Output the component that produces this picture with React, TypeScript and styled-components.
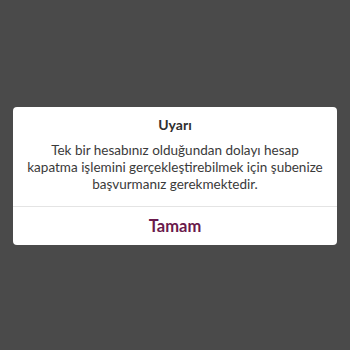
import React from 'react'
import styled, { createGlobalStyle } from 'styled-components'

const Global = createGlobalStyle`
  html, body {
    margin: 0;
    padding: 0;
    background: #4a4a4a;
  }
  #root {
    min-height: 100vh;
  }
`

const Overlay = styled.div`
  width: 350px;
  height: 350px;
  background: #4a4a4a;
  display: flex;
  align-items: center;
  justify-content: center;
  padding-top: 2px;
  box-sizing: border-box;
  font-family: Lato, 'Noto Sans', sans-serif;
`

const Card = styled.div`
  width: 324px;
  height: 138px;
  background: #ffffff;
  border-radius: 4px;
  display: flex;
  flex-direction: column;
  overflow: hidden;
`

const Body = styled.div`
  height: 100px;
  box-sizing: border-box;
  padding: 9px 12px 0;
  text-align: center;
  border-bottom: 1px solid #e4e4e4;
`

const Title = styled.div`
  font-size: 14px;
  font-weight: 700;
  color: #2f2f2f;
  line-height: 18px;
  margin-bottom: 7.5px;
`

const Message = styled.div`
  font-size: 13.5px;
  line-height: 17px;
  color: #3a3a3a;
`

const Action = styled.button`
  border: none;
  background: transparent;
  flex: 1;
  font-family: inherit;
  font-size: 16.5px;
  font-weight: 700;
  color: #6a1a4c;
  cursor: pointer;
`

export default function App() {
  return (
    <>
      <Global />
      <Overlay>
        <Card>
          <Body>
            <Title>Uyarı</Title>
            <Message>
              Tek bir hesabınız olduğundan dolayı hesap
              <br />
              kapatma işlemini gerçekleştirebilmek için şubenize
              <br />
              başvurmanız gerekmektedir.
            </Message>
          </Body>
          <Action>Tamam</Action>
        </Card>
      </Overlay>
    </>
  )
}
